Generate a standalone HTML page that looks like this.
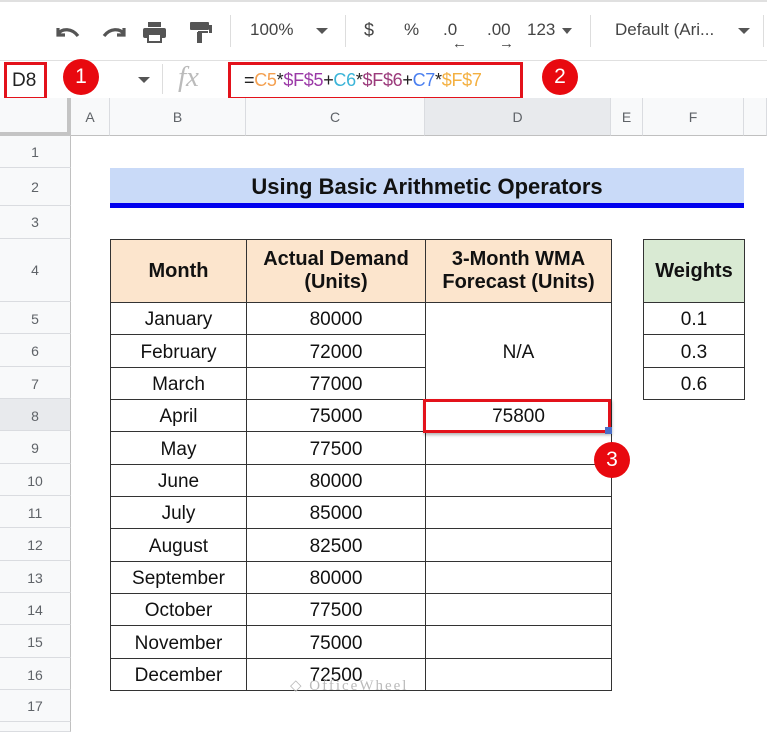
<!DOCTYPE html>
<html><head><meta charset="utf-8"><style>
*{margin:0;padding:0;box-sizing:border-box}
body{width:767px;height:724px;position:relative;overflow:hidden;background:#fff;font-family:"Liberation Sans",Arial,sans-serif}
.a{position:absolute}
.t{position:absolute;color:#444;font-size:17px;top:20px}
.ch{position:absolute;top:98px;height:38px;border-right:1px solid #dadce0;border-bottom:1px solid #c0c0c0;background:#f8f9fa;color:#5f6368;font-size:14px;text-align:center;line-height:38px}
.rh{position:absolute;left:0;width:71px;border-bottom:1px solid #dadce0;border-right:1px solid #c0c0c0;background:#f8f9fa;color:#5f6368;font-size:14px;text-align:center}
.c{position:absolute;border:1px solid #333;text-align:center;font-size:19px;color:#111;display:flex;align-items:center;justify-content:center;line-height:1.15;padding-top:3px}
.h{background:#fce5cd;font-weight:bold;font-size:20px;padding-top:0}
.badge{position:absolute;width:36px;height:36px;border-radius:50%;background:#e8090f;color:#fff;font-size:21px;text-align:center;line-height:36px}
</style></head><body>
<div class="a" style="left:0;top:0;width:767px;height:2px;background:#e0e0e0"></div>
<svg class="a" style="left:52px;top:20px" width="190" height="24" viewBox="0 0 190 24">
<path d="M6 8 L6 15 L13 15 M6 14 C10 8 20 8 26 16" fill="none" stroke="#555" stroke-width="3.2"/>
<path d="M72 8 L72 15 L65 15 M72 14 C68 8 58 8 52 16" fill="none" stroke="#555" stroke-width="3.2"/>
<rect x="96" y="2" width="13" height="5" fill="#555"/><rect x="91" y="8" width="23" height="10" rx="2" fill="#555"/><rect x="96" y="14" width="13" height="8" fill="#fff" stroke="#555" stroke-width="2"/>
<rect x="138" y="2" width="19" height="8" rx="1" fill="#555"/><rect x="157" y="5" width="3" height="8" fill="#555"/><rect x="146" y="11" width="10" height="2" fill="#555"/><rect x="145" y="12" width="5" height="11" fill="#555"/>
</svg>
<div class="a" style="left:230px;top:15px;width:1px;height:32px;background:#ddd"></div>
<div class="t" style="left:250px">100%</div>
<div class="a" style="left:316px;top:28px;border:6px solid transparent;border-top:6px solid #555"></div>
<div class="a" style="left:345px;top:15px;width:1px;height:32px;background:#ddd"></div>
<div class="t" style="left:364px;font-size:18px">$</div>
<div class="t" style="left:404px">%</div>
<div class="t" style="left:443px">.0</div>
<div class="a" style="left:452px;top:35px;font-size:15px;font-weight:bold;color:#444">&#8592;</div>
<div class="t" style="left:487px">.00</div>
<div class="a" style="left:499px;top:35px;font-size:15px;font-weight:bold;color:#444">&#8594;</div>
<div class="t" style="left:527px">123</div>
<div class="a" style="left:562px;top:28px;border:5px solid transparent;border-top:6px solid #555"></div>
<div class="a" style="left:590px;top:15px;width:1px;height:32px;background:#ddd"></div>
<div class="t" style="left:615px">Default (Ari...</div>
<div class="a" style="left:738px;top:28px;border:6px solid transparent;border-top:6px solid #555"></div>
<div class="a" style="left:763px;top:15px;width:1px;height:32px;background:#ddd"></div>
<div class="a" style="left:0;top:60px;width:767px;height:1px;background:#e0e0e0"></div>
<div class="a" style="left:4px;top:62px;width:43px;height:38px;border:3px solid #e3121b"></div>
<div class="a" style="left:12px;top:70px;font-size:19px;color:#222">D8</div>
<div class="badge" style="left:63px;top:59px">1</div>
<div class="a" style="left:138px;top:77px;border:6px solid transparent;border-top:6px solid #555"></div>
<div class="a" style="left:162px;top:64px;width:1px;height:30px;background:#ddd"></div>
<div class="a" style="left:178px;top:61px;font-size:29px;font-style:italic;color:#bbb;font-family:'Liberation Serif',serif">fx</div>
<div class="a" style="left:228px;top:62px;height:38px;width:295px;border:3px solid #e3121b"></div>
<div class="a" style="left:244px;top:70px;font-size:18px;letter-spacing:-0.3px"><span style="color:#222">=</span><span style="color:#f4a050">C5</span><span style="color:#222">*</span><span style="color:#9b3aa7">$F$5</span><span style="color:#222">+</span><span style="color:#3ab4d8">C6</span><span style="color:#222">*</span><span style="color:#9b3a7b">$F$6</span><span style="color:#222">+</span><span style="color:#4a7ff0">C7</span><span style="color:#222">*</span><span style="color:#f4b040">$F$7</span></div>
<div class="badge" style="left:542px;top:59px">2</div>
<div class="a" style="left:0;top:98px;width:767px;height:1px;background:#e0e0e0"></div>
<div class="ch" style="left:0;width:71px;border-right:4px solid #c4c4c4;border-bottom:4px solid #c4c4c4"></div>
<div class="ch" style="left:71px;width:39px">A</div>
<div class="ch" style="left:110px;width:136px">B</div>
<div class="ch" style="left:246px;width:179px">C</div>
<div class="ch" style="left:425px;width:186px;background:#e8eaed">D</div>
<div class="ch" style="left:611px;width:32px">E</div>
<div class="ch" style="left:643px;width:101px">F</div>
<div class="ch" style="left:744px;width:23px"></div>
<div class="rh" style="top:136px;height:32px;line-height:32px">1</div>
<div class="rh" style="top:168px;height:38px;line-height:38px">2</div>
<div class="rh" style="top:206px;height:33px;line-height:33px">3</div>
<div class="rh" style="top:239px;height:63px;line-height:63px">4</div>
<div class="rh" style="top:302px;height:32.3px;line-height:34px">5</div>
<div class="rh" style="top:334.3px;height:32.3px;line-height:34px">6</div>
<div class="rh" style="top:366.6px;height:32.3px;line-height:34px">7</div>
<div class="rh" style="top:399px;height:32.3px;line-height:34px;background:#e8eaed">8</div>
<div class="rh" style="top:431.3px;height:32.3px;line-height:34px">9</div>
<div class="rh" style="top:463.6px;height:32.3px;line-height:34px">10</div>
<div class="rh" style="top:496px;height:32.3px;line-height:34px">11</div>
<div class="rh" style="top:528.3px;height:32.3px;line-height:34px">12</div>
<div class="rh" style="top:560.6px;height:32.3px;line-height:34px">13</div>
<div class="rh" style="top:593px;height:32.3px;line-height:34px">14</div>
<div class="rh" style="top:625.3px;height:32.3px;line-height:34px">15</div>
<div class="rh" style="top:657.6px;height:32.3px;line-height:34px">16</div>
<div class="rh" style="top:690px;height:32.3px;line-height:32px">17</div>
<div class="rh" style="top:722px;height:10px"></div>
<div class="a" style="left:110px;top:168px;width:634px;height:36px;background:#c9daf8;text-align:center;font-weight:bold;font-size:22px;line-height:37px;color:#111">Using Basic Arithmetic Operators</div>
<div class="a" style="left:110px;top:203px;width:634px;height:5px;background:#0000ee"></div>
<div class="c h" style="left:110px;top:239px;width:137px;height:64px">Month</div>
<div class="c h" style="left:246px;top:239px;width:180px;height:64px">Actual Demand<br>(Units)</div>
<div class="c h" style="left:425px;top:239px;width:187px;height:64px">3-Month WMA<br>Forecast (Units)</div>
<div class="c h" style="left:643px;top:239px;width:102px;height:64px;background:#d9ead3">Weights</div>
<div class="c" style="left:643px;top:302px;width:102px;height:33.3px">0.1</div>
<div class="c" style="left:643px;top:334.3px;width:102px;height:33.3px">0.3</div>
<div class="c" style="left:643px;top:366.6px;width:102px;height:33.3px">0.6</div>
<div class="c" style="left:425px;top:302px;width:187px;height:98px">N/A</div>
<div class="c" style="left:110px;top:302px;width:137px;height:33.3px">January</div><div class="c" style="left:246px;top:302px;width:180px;height:33.3px">80000</div>
<div class="c" style="left:110px;top:334.3px;width:137px;height:33.3px">February</div><div class="c" style="left:246px;top:334.3px;width:180px;height:33.3px">72000</div>
<div class="c" style="left:110px;top:366.6px;width:137px;height:33.3px">March</div><div class="c" style="left:246px;top:366.6px;width:180px;height:33.3px">77000</div>
<div class="c" style="left:110px;top:399px;width:137px;height:33.3px">April</div><div class="c" style="left:246px;top:399px;width:180px;height:33.3px">75000</div><div class="c" style="left:425px;top:399px;width:187px;height:33.3px">75800</div>
<div class="c" style="left:110px;top:431.3px;width:137px;height:33.3px">May</div><div class="c" style="left:246px;top:431.3px;width:180px;height:33.3px">77500</div><div class="c" style="left:425px;top:431.3px;width:187px;height:33.3px"></div>
<div class="c" style="left:110px;top:463.6px;width:137px;height:33.3px">June</div><div class="c" style="left:246px;top:463.6px;width:180px;height:33.3px">80000</div><div class="c" style="left:425px;top:463.6px;width:187px;height:33.3px"></div>
<div class="c" style="left:110px;top:496px;width:137px;height:33.3px">July</div><div class="c" style="left:246px;top:496px;width:180px;height:33.3px">85000</div><div class="c" style="left:425px;top:496px;width:187px;height:33.3px"></div>
<div class="c" style="left:110px;top:528.3px;width:137px;height:33.3px">August</div><div class="c" style="left:246px;top:528.3px;width:180px;height:33.3px">82500</div><div class="c" style="left:425px;top:528.3px;width:187px;height:33.3px"></div>
<div class="c" style="left:110px;top:560.6px;width:137px;height:33.3px">September</div><div class="c" style="left:246px;top:560.6px;width:180px;height:33.3px">80000</div><div class="c" style="left:425px;top:560.6px;width:187px;height:33.3px"></div>
<div class="c" style="left:110px;top:593px;width:137px;height:33.3px">October</div><div class="c" style="left:246px;top:593px;width:180px;height:33.3px">77500</div><div class="c" style="left:425px;top:593px;width:187px;height:33.3px"></div>
<div class="c" style="left:110px;top:625.3px;width:137px;height:33.3px">November</div><div class="c" style="left:246px;top:625.3px;width:180px;height:33.3px">75000</div><div class="c" style="left:425px;top:625.3px;width:187px;height:33.3px"></div>
<div class="c" style="left:110px;top:657.6px;width:137px;height:33.3px">December</div><div class="c" style="left:246px;top:657.6px;width:180px;height:33.3px">72500</div><div class="c" style="left:425px;top:657.6px;width:187px;height:33.3px"></div>
<div class="a" style="left:423px;top:399px;width:188px;height:34px;border:3px solid #e3121b;box-shadow:1px 2px 3px rgba(0,0,0,.3)"></div>
<div class="a" style="left:605px;top:427px;width:7px;height:7px;background:#4a6fc8"></div>
<div class="badge" style="left:594px;top:442px">3</div>
<div class="a" style="left:290px;top:676px;font-size:15px;color:#bbb;letter-spacing:2px;font-family:'Liberation Serif',serif">&#9671; OfficeWheel</div>
</body></html>
